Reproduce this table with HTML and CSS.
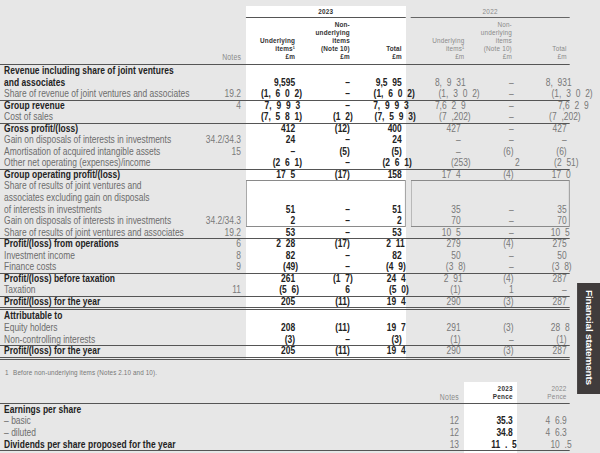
FILE: index.html
```html
<!DOCTYPE html>
<html lang="en">
<head>
<meta charset="utf-8">
<title>Consolidated income statement</title>
<link rel="stylesheet" href="styles.css">
</head>
<body>
<div class="frame">
<div class="sheet">
  <div class="main">
    <div class="yr">
      <div class="y23">2023</div>
      <div class="y22">2022</div>
    </div>
    <div class="colhead">
      <div class="n">Notes</div>
      <div class="a">Underlying<br>items¹<br>£m</div>
      <div class="b">Non-<br>underlying<br>items<br>(Note 10)<br>£m</div>
      <div class="c">Total<br>£m</div>
      <div class="d">Underlying<br>items¹<br>£m</div>
      <div class="e">Non-<br>underlying<br>items<br>(Note 10)<br>£m</div>
      <div class="f">Total<br>£m</div>
    </div>

    <div class="row hd">
      <div class="lbl">Revenue including share of joint ventures<br>and associates</div>
      <div class="a">9,595</div><div class="b">–</div><div class="c">9,5 95</div>
      <div class="d"><span class="x5">8, 9 31</span></div><div class="e">–</div><div class="f"><span class="x5">8, 931</span></div>
    </div>
    <div class="row">
      <div class="lbl">Share of revenue of joint ventures and associates</div>
      <div class="n">19.2</div>
      <div class="a"><span class="x7">(1, 6 0 2)</span></div><div class="b">–</div><div class="c"><span class="x13">(1, 6 0 2)</span></div>
      <div class="d"><span class="x19">(1, 3 0 2)</span></div><div class="e">–</div><div class="f"><span class="x26">(1, 3 0 2)</span></div>
    </div>
    <div class="row hd rule">
      <div class="lbl">Group revenue</div>
      <div class="n">4</div>
      <div class="a"><span class="x5">7, 9 9 3</span></div><div class="b">–</div><div class="c"><span class="x7">7, 9 9 3</span></div>
      <div class="d"><span class="x5">7,6 2 9</span></div><div class="e">–</div><div class="f"><span class="x22">7,6 2 9</span></div>
    </div>
    <div class="row">
      <div class="lbl">Cost of sales</div>
      <div class="a"><span class="x7">(7, 5 8 1)</span></div><div class="b"><span class="x3">(1 2)</span></div><div class="c"><span class="x14">(7, 5 9 3)</span></div>
      <div class="d"><span class="x10">(7 ,202)</span></div><div class="e">–</div><div class="f"><span class="x14">(7 ,202)</span></div>
    </div>
    <div class="row hd rule">
      <div class="lbl">Gross profit/(loss)</div>
      <div class="a">412</div><div class="b">(12)</div><div class="c">400</div>
      <div class="d">427</div><div class="e">–</div><div class="f">427</div>
    </div>
    <div class="row">
      <div class="lbl">Gain on disposals of interests in investments</div>
      <div class="n">34.2/34.3</div>
      <div class="a">24</div><div class="b">–</div><div class="c">24</div>
      <div class="d">–</div><div class="e">–</div><div class="f">–</div>
    </div>
    <div class="row">
      <div class="lbl">Amortisation of acquired intangible assets</div>
      <div class="n">15</div>
      <div class="a">–</div><div class="b">(5)</div><div class="c">(5)</div>
      <div class="d">–</div><div class="e">(6)</div><div class="f">(6)</div>
    </div>
    <div class="row">
      <div class="lbl">Other net operating (expenses)/income</div>
      <div class="a"><span class="x7">(2 6 1)</span></div><div class="b">–</div><div class="c"><span class="x10">(2 6 1)</span></div>
      <div class="d"><span class="x10">(253)</span></div><div class="e"><span class="x6">2</span></div><div class="f"><span class="x12">(2 51)</span></div>
    </div>
    <div class="row hd rule">
      <div class="lbl">Group operating profit/(loss)</div>
      <div class="a">17 5</div><div class="b">(17)</div><div class="c">158</div>
      <div class="d">17 4</div><div class="e">(4)</div><div class="f"><span class="x4">17 0</span></div>
    </div>
    <div class="row bt">
      <div class="lbl">Share of results of joint ventures and<br>associates excluding gain on disposals<br>of interests in investments</div>
      <div class="a">51</div><div class="b">–</div><div class="c">51</div>
      <div class="d">35</div><div class="e">–</div><div class="f">35</div>
    </div>
    <div class="row bb">
      <div class="lbl">Gain on disposals of interests in investments</div>
      <div class="n">34.2/34.3</div>
      <div class="a">2</div><div class="b">–</div><div class="c">2</div>
      <div class="d">70</div><div class="e">–</div><div class="f">70</div>
    </div>
    <div class="row">
      <div class="lbl">Share of results of joint ventures and associates</div>
      <div class="n">19.2</div>
      <div class="a">53</div><div class="b">–</div><div class="c">53</div>
      <div class="d">10 5</div><div class="e">–</div><div class="f"><span class="x3">10 5</span></div>
    </div>
    <div class="row hd rule">
      <div class="lbl">Profit/(loss) from operations</div>
      <div class="n">6</div>
      <div class="a">2 28</div><div class="b">(17)</div><div class="c"><span class="x3">2 11</span></div>
      <div class="d">279</div><div class="e">(4)</div><div class="f">275</div>
    </div>
    <div class="row">
      <div class="lbl">Investment income</div>
      <div class="n">8</div>
      <div class="a">82</div><div class="b">–</div><div class="c">82</div>
      <div class="d">50</div><div class="e">–</div><div class="f">50</div>
    </div>
    <div class="row">
      <div class="lbl">Finance costs</div>
      <div class="n">9</div>
      <div class="a"><span class="x3">(49)</span></div><div class="b">–</div><div class="c"><span class="x4">(4 9)</span></div>
      <div class="d"><span class="x5">(3 8)</span></div><div class="e">–</div><div class="f"><span class="x5">(3 8)</span></div>
    </div>
    <div class="row hd rule">
      <div class="lbl">Profit/(loss) before taxation</div>
      <div class="a">261</div><div class="b"><span class="x3">(1 7)</span></div><div class="c"><span class="x4">24 4</span></div>
      <div class="d"><span class="x2">2 91</span></div><div class="e">(4)</div><div class="f">287</div>
    </div>
    <div class="row">
      <div class="lbl">Taxation</div>
      <div class="n">11</div>
      <div class="a"><span class="x4">(5 6)</span></div><div class="b">6</div><div class="c"><span class="x7">(5 0)</span></div>
      <div class="d">(1)</div><div class="e">1</div><div class="f">–</div>
    </div>
    <div class="row hd rule dbl">
      <div class="lbl">Profit/(loss) for the year</div>
      <div class="a">205</div><div class="b">(11)</div><div class="c"><span class="x4">19 4</span></div>
      <div class="d">290</div><div class="e">(3)</div><div class="f">287</div>
    </div>
    <div class="row hd">
      <div class="lbl">Attributable to</div>
    </div>
    <div class="row">
      <div class="lbl">Equity holders</div>
      <div class="a">208</div><div class="b">(11)</div><div class="c"><span class="x4">19 7</span></div>
      <div class="d">291</div><div class="e">(3)</div><div class="f"><span class="x3">28 8</span></div>
    </div>
    <div class="row">
      <div class="lbl">Non-controlling interests</div>
      <div class="a">(3)</div><div class="b">–</div><div class="c">(3)</div>
      <div class="d">(1)</div><div class="e">–</div><div class="f">(1)</div>
    </div>
    <div class="row hd rule dbl">
      <div class="lbl">Profit/(loss) for the year</div>
      <div class="a">205</div><div class="b">(11)</div><div class="c"><span class="x4">19 4</span></div>
      <div class="d">290</div><div class="e">(3)</div><div class="f">287</div>
    </div>
  </div>

  <p class="note"><span class="fn">1</span>Before non-underlying items (Notes 2.10 and 10).</p>

  <div class="eps">
    <div class="eh">
      <div class="en">Notes</div>
      <div class="e23">2023<br>Pence</div>
      <div class="e22">2022<br>Pence</div>
    </div>
    <div class="er hd">
      <div class="lbl">Earnings per share</div>
    </div>
    <div class="er">
      <div class="lbl">– basic</div>
      <div class="en">12</div><div class="e23">35.3</div><div class="e22">4 6.9</div>
    </div>
    <div class="er">
      <div class="lbl">– diluted</div>
      <div class="en">12</div><div class="e23">34.8</div><div class="e22">4 6.3</div>
    </div>
    <div class="er hd last">
      <div class="lbl">Dividends per share proposed for the year</div>
      <div class="en">13</div><div class="e23"><span class="x4">11 . 5</span></div><div class="e22"><span class="x5">10 .5</span></div>
    </div>
  </div>

  <div class="tab">Financial statements</div>
</div>
</div>
</body>
</html>
```

FILE: styles.css
```css
* {
  box-sizing: border-box;
  margin: 0;
  padding: 0;
}

body {
  margin: 0;
  background: #e7e7e7;
  font-family: "Liberation Sans", Arial, Helvetica, sans-serif;
}

/* viewport-sized frame that clips the condensed sheet */
.frame {
  width: 600px;
  height: 453px;
  overflow: hidden;
}

/* The printed page uses a narrow grotesque; the sheet is laid out at
   full width and condensed horizontally to reproduce it. */
.sheet {
  position: relative;
  width: 732px;
  height: 453px;
  overflow: hidden;
  background: #e7e7e7;
  padding-top: 6px;
  transform: scaleX(0.8197);
  transform-origin: 0 0;
}

/* ---------- main income statement ---------- */
.main {
  width: 695px;
  background: linear-gradient(to right, transparent 300px, #fff 300px, #fff 495px, transparent 495px);
}

.yr,
.colhead,
.row {
  display: grid;
  grid-template-columns: 244px 56px 66px 64.5px 64.5px 6px 67px 63.5px 63.5px;
}

.yr {
  height: 12px;
  font-size: 7.8px;
  letter-spacing: 0.3px;
  line-height: 11px;
  text-align: center;
}

.y23 {
  grid-column: 3 / 6;
  border-bottom: 1px solid #555;
  font-weight: 700;
  color: #333;
}

.y22 {
  grid-column: 7 / 10;
  border-bottom: 1px solid #666;
  color: #8a8a8a;
}

.colhead {
  height: 47px;
  padding-bottom: 4px;
  box-shadow: inset 0 -1px 0 #555;
  font-size: 7.8px;
  letter-spacing: 0.2px;
  line-height: 8px;
}

.colhead > div {
  align-self: end;
  text-align: right;
}

.colhead .a,
.colhead .b,
.colhead .c {
  font-weight: 700;
  color: #333;
}

.colhead .n,
.colhead .d,
.colhead .e,
.colhead .f {
  color: #8a8a8a;
}

.colhead .n { font-size: 8.4px; }
.colhead .d { padding-right: 1.5px; }
.colhead .e { padding-right: 7px; }

.row {
  font-size: 10.3px;
  line-height: 11.55px;
}

.row > div:not(.lbl) {
  display: flex;
  justify-content: flex-end;
  align-items: flex-end;
  white-space: nowrap;
  word-spacing: 3px;
}

.lbl {
  grid-column: 1;
  padding-left: 5px;
  color: #6c6c6c;
  white-space: nowrap;
}

.hd .lbl {
  font-weight: 700;
  color: #222;
  letter-spacing: 0.05px;
}

.n { grid-column: 2; padding-right: 6px; color: #7a7a7a; }
.a { grid-column: 3; padding-right: 6px; }
.b { grid-column: 4; padding-right: 3.7px; }
.c { grid-column: 5; padding-right: 4.9px; }
.d { grid-column: 7; padding-right: 6px; }
.e { grid-column: 8; padding-right: 4.9px; }
.f { grid-column: 9; padding-right: 3.7px; }

.row .a,
.row .b,
.row .c {
  font-weight: 700;
  color: #222;
}

.row .d,
.row .e,
.row .f {
  color: #787878;
}

.rule {
  box-shadow: inset 0 1px 0 #555;
}

.dbl {
  border-bottom: 3px double #555;
}

/* boxed sub-section */
.bt > .a, .bt > .d { box-shadow: inset 1px 1px 0 #8a8a8a; }
.bt > .b, .bt > .e { box-shadow: inset 0 1px 0 #8a8a8a; }
.bt > .c, .bt > .f { box-shadow: inset -1px 1px 0 #8a8a8a; }
.bb > .a, .bb > .d { box-shadow: inset 1px -1px 0 #8a8a8a; }
.bb > .b, .bb > .e { box-shadow: inset 0 -1px 0 #8a8a8a; }
.bb > .c, .bb > .f { box-shadow: inset -1px -1px 0 #8a8a8a; }

.x2 { margin-right: -2.4px; }
.x3 { margin-right: -3.7px; }
.x4 { margin-right: -4.9px; }
.x5 { margin-right: -6.1px; }
.x6 { margin-right: -7.3px; }
.x7 { margin-right: -8.5px; }
.x10 { margin-right: -12.2px; }
.x12 { margin-right: -14.6px; }
.x13 { margin-right: -15.9px; }
.x14 { margin-right: -17.1px; }
.x19 { margin-right: -23.2px; }
.x22 { margin-right: -26.8px; }
.x26 { margin-right: -31.7px; }

/* ---------- footnote ---------- */
.note {
  margin: 9px 0 5px;
  padding-left: 6px;
  font-size: 7.7px;
  letter-spacing: 0.15px;
  line-height: 8px;
  color: #777;
}

.fn {
  display: inline-block;
  width: 10px;
}

/* ---------- earnings per share ---------- */
.eps {
  width: 695px;
  background: linear-gradient(to right, transparent 566px, #fff 566px, #fff 630.5px, transparent 630.5px);
  padding-bottom: 2px;
}

.eh,
.er {
  display: grid;
  grid-template-columns: 512px 54px 64.5px 64.5px;
}

.eh {
  height: 22px;
  padding-bottom: 2px;
  box-shadow: inset 0 -1px 0 #555;
  font-size: 7.8px;
  letter-spacing: 0.3px;
  line-height: 8.5px;
}

.eh > div {
  align-self: end;
  text-align: right;
}

.eh .en { color: #8a8a8a; font-size: 8.4px; }
.eh .e23 { font-weight: 700; color: #333; }
.eh .e22 { color: #8a8a8a; }

.er {
  height: 11.8px;
  font-size: 10.3px;
  line-height: 11.8px;
}

.er.last {
  box-shadow: inset 0 -1px 0 #555;
}

.en { grid-column: 2; padding-right: 6px; }
.e23 { grid-column: 3; padding-right: 4.9px; }
.e22 { grid-column: 4; padding-right: 3.7px; }

.er > .en,
.er > .e23,
.er > .e22 {
  display: flex;
  justify-content: flex-end;
  white-space: nowrap;
  word-spacing: 3px;
}

.er > .en { color: #7a7a7a; }
.er > .e23 { font-weight: 700; color: #222; }
.er > .e22 { color: #787878; }

/* ---------- side tab ---------- */
.tab {
  position: absolute;
  left: 704px;
  top: 283px;
  width: 28px;
  height: 111px;
  padding-top: 7px;
  background: #403c3c;
  color: #fff;
  writing-mode: vertical-rl;
  font-weight: 700;
  font-size: 10px;
  letter-spacing: -0.2px;
  line-height: 28px;
}
```
